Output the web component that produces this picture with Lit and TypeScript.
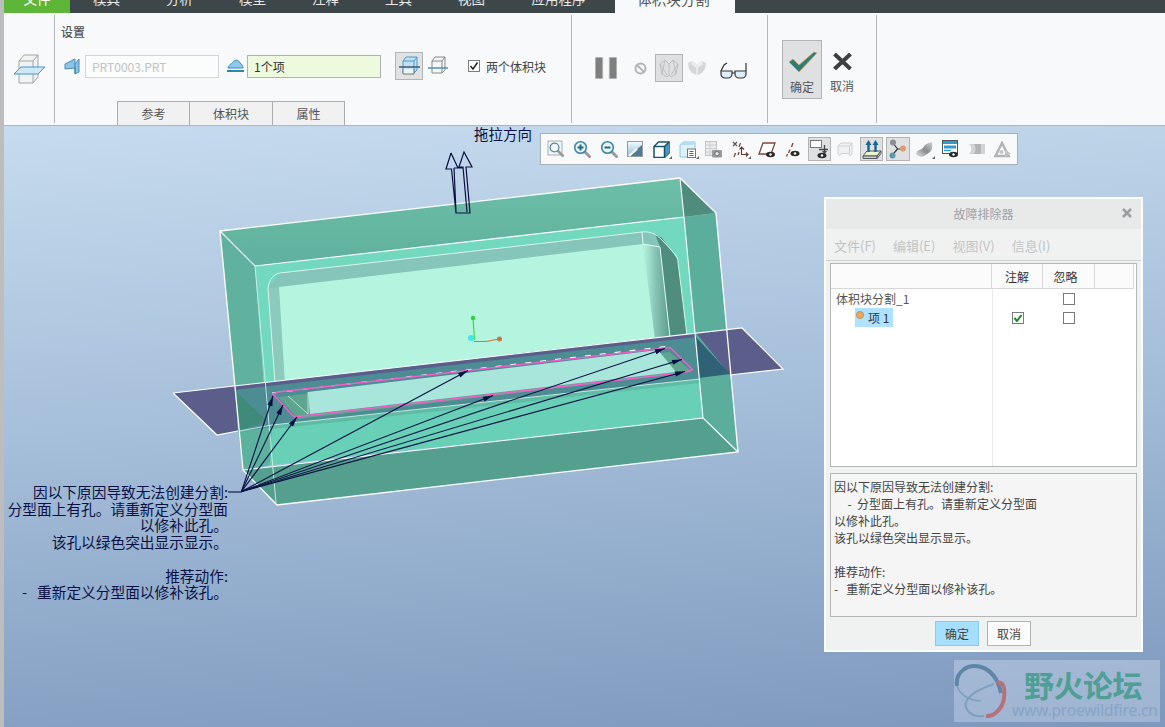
// app.ts - Creo volume split screen with the troubleshooter dialog open
import { LitElement, html, css, svg } from 'lit';
import { customElement } from 'lit/decorators.js';

const eye = (x: number, y: number) => svg`
  <ellipse cx=${x} cy=${y} rx="4.5" ry="2.8" fill="#2b2b2b" />
  <circle cx=${x} cy=${y} r="1.2" fill="#fff" />
`;

const icon = (w: number, h: number, body: unknown) => html`
  <svg width=${w} height=${h} viewBox="0 0 ${w} ${h}">${body}</svg>
`;

const lens = (sign: string) => svg`
  <path d="M11.5 11.5 16.5 16.5" stroke="#9a9a9a" stroke-width="3" stroke-linecap="round" />
  <circle cx="7.5" cy="7.5" r="5.8" fill="#eaf4fa" stroke="#3f86a6" stroke-width="1.6" />
  ${sign === '+' ? svg`<path d="M7.5 4.5v6" stroke="#1f6a8c" stroke-width="2" />` : ''}
  <path d="M4.5 7.5h6" stroke="#1f6a8c" stroke-width="2" />
`;

// floating view toolbar, left to right
const viewTools = [
  { pressed: false, more: false, art: icon(18, 18, svg`
    <rect x="1" y="1" width="14" height="14" fill="#f3f6f8" stroke="#a9adb0" />
    <path d="M10.5 10.5 16.5 16.5" stroke="#9a9a9a" stroke-width="2.6" />
    <circle cx="7.5" cy="7.5" r="4.4" fill="#f3f8fb" stroke="#4b8ca8" stroke-width="1.3" />`) },
  { pressed: false, more: false, art: icon(18, 18, lens('+')) },
  { pressed: false, more: false, art: icon(18, 18, lens('-')) },
  { pressed: false, more: false, art: icon(16, 16, svg`
    <defs><linearGradient id="sky" x1="0" y1="0" x2="0" y2="1">
      <stop offset="0" stop-color="#f4fbff" /><stop offset="1" stop-color="#8fc0de" />
    </linearGradient></defs>
    <rect x=".5" y=".5" width="15" height="15" fill="url(#sky)" stroke="#9b9b9b" />
    <path d="M2 15 15 4v11Z" fill="#4d7c96" />
    <path d="M2 15 10 8" stroke="#fff" stroke-width="2" />`) },
  { pressed: false, more: true, art: icon(17, 17, svg`
    <path d="M1 5.5 5.5 1H16v11l-4.5 4.5H1Z" fill="#fff" stroke="#17536c" stroke-width="1.5" />
    <path d="M11.5 5.5 16 1v11l-4.5 4.5Z" fill="#4f95b8" />
    <path d="M1 5.5h10.5v11M11.5 5.5 16 1" fill="none" stroke="#17536c" stroke-width="1.5" />`) },
  { pressed: false, more: true, art: icon(17, 17, svg`
    <path d="M1 4 4 1h12v9H11v6H1Z" fill="#dff1fb" stroke="#8fc6e6" />
    <path d="M1 4 4 1h12l-2 3Z" fill="#b4dcf2" />
    <rect x="8.5" y="8" width="8" height="8.5" fill="#fff" stroke="#777" />
    <path d="M10.5 10.5h4M10.5 12.5h4M10.5 14.5h4" stroke="#666" />`) },
  { pressed: false, more: false, art: icon(17, 17, svg`
    <rect x=".5" y=".5" width="11" height="14" fill="#ececec" stroke="#c4c4c4" />
    <path d="M1 4h10M1 7.5h10M1 11h10M5 1v13" stroke="#cfcfcf" />
    <rect x="7" y="9" width="10" height="7.5" rx="1" fill="#9b9b9b" />
    <circle cx="12" cy="12.7" r="2.2" fill="#e6e6e6" stroke="#6c6c6c" />`) },
  { pressed: false, more: true, art: icon(17, 17, svg`
    <path d="M1 1 5 5M5 1 1 5" stroke="#555" stroke-width="1.2" />
    <path d="M8.5 2 7 6M3.5 12 2 16M7 11 6 14" stroke="#7a4a3c" stroke-width="1.3" />
    <path d="M9.5 6v7.5H16M12 8.5 9.5 6 7.5 8.5M14 11.5l2 2-2 2" fill="none" stroke="#5d3a30" stroke-width="1.1" />`) },
  { pressed: false, more: false, art: icon(18, 17, svg`
    <path d="M5 2h12l-4 11H1Z" fill="#fff" stroke="#7a4a3c" stroke-width="1.3" />
    ${eye(12.5, 13.5)}`) },
  { pressed: false, more: false, art: icon(15, 15, svg`
    <path d="M8 1 6.5 5M5 7.5 3.5 11M2.5 12 1.5 14.5" stroke="#8a4a3c" stroke-width="1.4" />
    ${eye(10, 11.5)}`) },
  { pressed: true, more: false, art: icon(19, 19, svg`
    <rect x=".5" y=".5" width="11" height="7" fill="#fff" stroke="#777" />
    <path d="M9 9.5h9M14.5 5v8" stroke="#444" stroke-width="1.3" />
    <path d="M12 11h5l-2.5 3Z" fill="#444" />
    ${eye(12, 15.5)}`) },
  { pressed: false, more: false, art: icon(16, 15, svg`
    <path d="M1 4 4 1h11v11l-2 2-1-2.5H4L2.5 14 1 12Z" fill="#f0f1f1" stroke="#d0d2d2" />
    <path d="M1 4h11.5L15 1M12.5 4v8" fill="none" stroke="#d0d2d2" />`) },
  { pressed: true, more: false, art: icon(20, 20, svg`
    <path d="M1 17 5 12h14l-4 5Z" fill="#eaf6cf" stroke="#556" />
    <path d="M1 17h14v2.5H1ZM15 17l4-5v2.5l-4 5Z" fill="#c9d8a9" stroke="#556" />
    <path d="M6.5 13V5M13.5 13V5" stroke="#14688c" stroke-width="2.4" />
    <path d="M3.5 6 6.5 1 9.5 6ZM10.5 6 13.5 1 16.5 6Z" fill="#14688c" />`) },
  { pressed: true, more: false, art: icon(18, 20, svg`
    <path d="M4 4 8.5 10 3.5 16M8.5 10H14" stroke="#2f3a3f" stroke-width="1.2" fill="none" />
    <circle cx="4" cy="3.5" r="3" fill="#8b8d90" />
    <circle cx="14" cy="9.5" r="3" fill="#e09a70" />
    <circle cx="3.5" cy="16.5" r="3" fill="#5a97b0" />`) },
  { pressed: false, more: true, art: icon(18, 17, svg`
    <defs><linearGradient id="steel" x1="0" y1="1" x2="1" y2="0">
      <stop offset="0" stop-color="#e6e6e6" /><stop offset=".5" stop-color="#8a8a8a" /><stop offset="1" stop-color="#d5d5d5" />
    </linearGradient></defs>
    <path d="M1 13C1 9 6 9 8 7c1-3 4-5 9-6 1 5 0 10-5 12-3 3-8 4-11 0Z" fill="url(#steel)" />`) },
  { pressed: false, more: false, art: icon(17, 18, svg`
    <rect x=".5" y=".5" width="15" height="13" fill="#fff" stroke="#555" />
    <rect x="1" y="1" width="14" height="3" fill="#2f9ad0" />
    <rect x="2" y="5.5" width="12" height="3" fill="#2f9ad0" />
    <path d="M2 10.5h7" stroke="#2f9ad0" stroke-width="1.5" />
    ${eye(11.5, 14.5)}`) },
  { pressed: false, more: false, art: icon(16, 12, svg`
    <path d="M0 1h16v10H0c3-3 3-7 0-10Z" fill="#d4d4d4" />
    <path d="M5 1h7v10H5c2-3 2-7 0-10Z" fill="#b4b4b4" />`) },
  { pressed: false, more: false, art: icon(18, 17, svg`
    <path d="M8 2 1.5 15h13Z" fill="none" stroke="#b4b4b4" stroke-width="2.5" />
    <circle cx="7.5" cy="11" r="2" fill="#c8c8c8" />
    <path d="M11 9l6 3.5-6 3.5Z" fill="#c2c2c2" />`) },
];

const ribbonTabs = ['模具', '分析', '模型', '注释', '工具', '视图'];

@customElement('model-view')
export class ModelView extends LitElement {
  static override styles = css`
    :host {
      display: block;
      position: absolute;
      inset: 0;
    }

    svg {
      display: block;
    }
  `;

  private arrows() {
    const ox = 241.5;
    const oy = 491.5;
    const targets = [
      [273, 396], [283, 405], [297, 417], [468, 370.5], [493, 395.5],
      [665, 348.5], [682, 359.5], [685, 371.5],
    ];
    return targets.map(([x, y]) => {
      const len = Math.hypot(x - ox, y - oy);
      const ux = (x - ox) / len;
      const uy = (y - oy) / len;
      const bx = x - ux * 10;
      const by = y - uy * 10;
      const head = `${x},${y} ${bx - uy * 2.6},${by + ux * 2.6} ${bx + uy * 2.6},${by - ux * 2.6}`;
      return svg`
        <line x1=${ox} y1=${oy} x2=${x} y2=${y} stroke="#0b1044" stroke-width="1.1" />
        <polygon points=${head} fill="#0b1044" />
      `;
    });
  }

  override render() {
    return html`
      <svg width="1161" height="601" viewBox="4 126 1161 601">
        <defs>
          <linearGradient id="topFace" x1="0" y1="0" x2="0" y2="1">
            <stop offset="0" stop-color="#6dbfa9" /><stop offset="1" stop-color="#5fb09c" />
          </linearGradient>
          <linearGradient id="wallFade" x1="0" y1="0" x2="1" y2="0">
            <stop offset="0" stop-color="#b5f5df" /><stop offset=".5" stop-color="#84bfb3" /><stop offset="1" stop-color="#5b9c8c" />
          </linearGradient>
        </defs>

        <!-- block faces -->
        <polygon points="220,231 680,178 684,217 255,266" fill="url(#topFace)" />
        <polygon points="680,178 716,213 684,217" fill="#4f8c7b" />
        <polygon points="684,217 716,213 738,452 703,418" fill="#5bae9b" />
        <polygon points="220,231 255,266 270,465 243,470" fill="#60b29e" />
        <polygon points="243,470 703,418 738,452 277,505" fill="#549f8e" />
        <polygon points="255,266 684,217 703,418 270,465" fill="#72d8be" />

        <!-- cavity -->
        <polygon points="280,273 642,232 655,234 660,247 643,244 279,287 268,288" fill="#86c5ba" />
        <polygon points="268,288 279,287 285,381 275,383" fill="#8ccabd" />
        <polygon points="279,287 643,244 657,340 285,384" fill="#b5f5df" />
        <polygon points="643,244 660,247 670,338 655,340" fill="url(#wallFade)" />
        <polygon points="655,234 662,238 678,260 687,336 670,338 660,247" fill="#4f8e7e" />
        <path d="M268 288C269 279 274 274 280 273L642 232C650 231 656 234 662 240L675 254C677 257 678 259 678 262L687 335M268 288 275 383" fill="none" stroke="#d9f5ea" stroke-width="1" />
        <path d="M643 244 660 247M642 232 643 244M660 247 670 337" fill="none" stroke="#e4f7f0" stroke-width="1" />

        <!-- parting plane through the block -->
        <polygon points="173,393 235,386 238,431 217,435" fill="#5b5e8b" />
        <polygon points="696,333 742,328 783,369 730,375" fill="#5b5e8b" />
        <polygon points="696,337 730,374 699,378" fill="#2f6277" />
        <polygon points="270,426 700,379 703,418 270,465" fill="#67d0b6" />
        <polygon points="238,431 272,425 270,465 243,470" fill="#5cb29e" />
        <polygon points="235,386 696,333 700,379 238,431" fill="#4c8c93" />
        <polygon points="236,392 267,421 238,431" fill="#3f8a78" />
        <polygon points="235,386 696,333 696,337 235,390" fill="#5b5e8b" />
        <polygon points="278,397 670,352 692,372 298,419" fill="#5da58f" />
        <polygon points="308,392 658,350 676,372 310,414" fill="#a8e6dc" />
        <polygon points="272,425 700,379 700,383 272,429" fill="#5fbba4" />

        <path d="M173 393 742 328 783 369 730 375M173 393 217 435 238 431" fill="none" stroke="#fff" stroke-width="1.2" />
        <path d="M272 393 670 346" fill="none" stroke="#fff" stroke-width="1.2" stroke-dasharray="6 9" />
        <path d="M273 394 278 392 670 347.5 692.5 369.5 685 372.5 298 416.5 293 416Z" fill="none" stroke="#f060c8" stroke-width="1.5" />
        <path d="M308 392V414M288 396 308 414" fill="none" stroke="#cdeee4" stroke-width=".8" />

        <!-- white silhouette edges -->
        <path d="M220 231 680 178 716 213 738 452 277 505 243 470Z" fill="none" stroke="#fff" stroke-width="1.3" />
        <path d="M220 231 255 266 684 217 680 178M684 217 703 418 738 452M243 470 703 418" fill="none" stroke="#fff" stroke-width="1.1" />
        <path d="M255 266 276 503M239 431 272 425M272 425 700 379" fill="none" stroke="#cdeee4" stroke-width=".9" />

        <!-- model origin -->
        <path d="M474.5 340 473 318" stroke="#35e23c" stroke-width="1.2" />
        <circle cx="473" cy="318" r="2.2" fill="#2fd13a" />
        <path d="M474 341.5 486 341.5 499 339" fill="none" stroke="#c47b3c" stroke-width="1.2" />
        <circle cx="499.5" cy="339" r="2.5" fill="#c47b3c" />
        <circle cx="471" cy="338" r="3" fill="#3fe6ee" />

        <!-- pull direction arrow -->
        <path d="M451 153 446 169 451.5 169 456 213H470L466 167 472 167 464 152 459 167 463 167 467 212M451 153 458 168M454 168 456 212M454 168H463" fill="none" stroke="#0b1044" stroke-width="1.2" />

        <!-- leader fan -->
        <line x1="228" y1="492" x2="242" y2="492" stroke="#0b1044" stroke-width="1.1" />
        ${this.arrows()}
      </svg>
    `;
  }
}

@customElement('app-root')
export class AppRoot extends LitElement {
  static override styles = css`
    :host {
      display: block;
      width: 1165px;
      height: 727px;
      overflow: hidden;
      font-family: 'Noto Sans CJK SC', 'Noto Sans', sans-serif;
      font-size: 12px;
      color: #444;
    }

    svg {
      display: block;
      flex: none;
    }

    .shell {
      display: flex;
      height: 100%;
    }

    .strip {
      width: 4px;
      flex: none;
      background: #bdbdbd;
    }

    .main {
      flex: 1;
      display: flex;
      flex-direction: column;
      min-width: 0;
    }

    /* ribbon tabs, cut off by the top of the screenshot */
    .tabs {
      height: 13px;
      flex: none;
      display: flex;
      overflow: hidden;
      background: #3d4648;
      color: #e8eaea;
      font-size: 13.5px;
      line-height: 1px;
    }

    .tab {
      width: 73px;
      text-align: center;
    }

    .tab span {
      display: block;
      margin-top: -2px;
    }

    .tab.file {
      width: 66px;
      background: #5db637;
      color: #fff;
    }

    .tab.apps {
      width: 107px;
      padding-right: 6px;
      box-sizing: border-box;
    }

    .tab.active {
      width: 120px;
      background: #f8f9fb;
      color: #555;
      font-size: 14.5px;
      padding-right: 3px;
      box-sizing: border-box;
    }

    .ribbon {
      height: 112px;
      flex: none;
      display: flex;
      background: #f8f9fb;
      border-bottom: 1px solid #b3b6b8;
    }

    .group {
      display: flex;
      flex: none;
      margin: 2px 0;
      border-right: 1px solid #b4b6b8;
    }

    .group.feature {
      width: 51px;
      align-items: center;
      justify-content: center;
      box-sizing: border-box;
    }

    .group.settings {
      width: 517px;
      flex-direction: column;
      padding-left: 6px;
      box-sizing: border-box;
    }

    .group.settings .title {
      margin-top: 8px;
      height: 17px;
      line-height: 17px;
      color: #555;
      font-weight: 500;
    }

    .fields {
      display: flex;
      align-items: center;
      margin-top: 12px;
      height: 28px;
    }

    .part-icon {
      margin-left: 3px;
    }

    .field {
      width: 134px;
      height: 23px;
      box-sizing: border-box;
      padding-left: 6px;
      line-height: 21px;
      border: 1px solid #d3d5d6;
      background: #fbfcfc;
      color: #bfc3c5;
      margin-left: 5px;
    }

    .plane-icon {
      margin-left: 8px;
    }

    .field.picked {
      border-color: #b0b2b1;
      background: #edfadd;
      color: #333;
      margin-left: 3px;
    }

    .toggle {
      width: 28px;
      height: 28px;
      margin-left: 14px;
      box-sizing: border-box;
      display: flex;
      align-items: center;
      justify-content: center;
      background: #e0e1e3;
      border: 1px solid #b2b4b5;
    }

    .alt-icon {
      margin-left: 5px;
    }

    .check-row {
      display: flex;
      align-items: center;
      gap: 6px;
      margin-left: 20px;
    }

    .box {
      width: 12px;
      height: 12px;
      box-sizing: border-box;
      border: 1px solid #7b7b7b;
      background: #fff;
      display: flex;
      align-items: center;
      justify-content: center;
      flex: none;
    }

    .subtabs {
      display: flex;
      margin: auto 0 -2px 56px;
    }

    .subtab {
      height: 24px;
      box-sizing: border-box;
      line-height: 24px;
      text-align: center;
      background: #f0f1f0;
      border: 1px solid #adadad;
      border-bottom: none;
      margin-right: -1px;
      color: #555;
    }

    .subtab.narrow {
      width: 73px;
    }

    .subtab.wide {
      width: 84px;
    }

    .group.display {
      width: 196px;
      align-items: center;
      padding: 0 0 2px 23px;
      box-sizing: border-box;
    }

    .no-icon {
      margin-left: 17px;
    }

    .glasses {
      margin: 5px 0 0 14px;
    }

    .group.confirm {
      width: 109px;
      padding: 25px 0 0 14px;
      box-sizing: border-box;
    }

    .pressed {
      background: #dfe0e2;
      border: 1px solid #b2b4b5;
      box-sizing: border-box;
    }

    .wire {
      width: 28px;
      height: 28px;
      display: flex;
      align-items: center;
      justify-content: center;
      margin: 0 5px 0 8px;
    }

    .action {
      width: 40px;
      height: 59px;
      box-sizing: border-box;
      display: flex;
      flex-direction: column;
      align-items: center;
      padding-top: 10px;
      gap: 7px;
      color: #555;
      line-height: 16px;
    }

    .action.cancel {
      padding-top: 13px;
      gap: 8px;
    }

    /* graphics window */
    .canvas {
      flex: 1;
      position: relative;
      background: linear-gradient(176deg, #c6dbee 0%, #a6bfda 45%, #7d98bd 100%);
    }

    .drag-label {
      position: absolute;
      left: 470px;
      top: 0;
      font-size: 14.5px;
      line-height: 16px;
      color: #0b1044;
    }

    .annotation {
      position: absolute;
      left: 0;
      top: 358px;
      width: 224px;
      font-size: 14.7px;
      line-height: 16.7px;
      color: #0b1044;
      text-align: right;
      white-space: pre;
    }

    .view-tools {
      position: absolute;
      left: 536px;
      top: 7px;
      width: 478px;
      height: 32px;
      box-sizing: border-box;
      padding-left: 2px;
      display: flex;
      align-items: center;
      background: #f8f9fb;
      border: 1.5px solid #a9b1b8;
    }

    .tool {
      width: 26.3px;
      height: 24px;
      flex: none;
      position: relative;
      display: flex;
      align-items: center;
      justify-content: center;
    }

    .tool.pressed {
      background: none;
      border: none;
    }

    .tool.pressed::before {
      content: '';
      position: absolute;
      inset: 0 1.6px;
      background: #dfe0e2;
      border: 1px solid #b2b4b5;
    }

    .tool svg {
      position: relative;
    }

    .tool.more::after {
      content: '';
      position: absolute;
      right: 2px;
      bottom: 2px;
      border-left: 3px solid transparent;
      border-bottom: 3px solid #666;
    }

    /* troubleshooter dialog */
    .dialog {
      position: absolute;
      left: 820px;
      top: 71px;
      width: 319px;
      height: 455px;
      box-sizing: border-box;
      display: flex;
      flex-direction: column;
      background: #f0f2f1;
      border: 2px solid #fbfcfc;
    }

    .dialog-title {
      height: 30px;
      flex: none;
      position: relative;
      background: #e8eae9;
      color: #9aa2a8;
      text-align: center;
      line-height: 30px;
    }

    .dialog-close {
      position: absolute;
      right: 9px;
      top: 9px;
    }

    .menu {
      height: 32px;
      flex: none;
      box-sizing: border-box;
      display: flex;
      gap: 17px;
      align-items: center;
      padding: 1px 0 0 8px;
      border-bottom: 1px solid #cfd2d2;
      color: #c0c4c6;
      font-size: 13px;
    }

    .tree {
      height: 204px;
      flex: none;
      margin: 2px 4px 0;
      box-sizing: border-box;
      display: flex;
      flex-direction: column;
      background: #fff;
      border: 1px solid #b5b7b7;
    }

    .tree-head,
    .tree-row {
      display: grid;
      grid-template-columns: 161px 51px 52px 1fr;
    }

    .tree-head {
      height: 24px;
      flex: none;
      margin-right: 2px;
      background: #fbfbfb;
      border-bottom: 1px solid #d8d8d8;
      line-height: 25px;
      color: #333;
    }

    .tree-head > div {
      border-right: 1px solid #d8d8d8;
      text-align: center;
    }

    .tree-head .shift {
      padding-right: 6px;
    }

    .tree-body {
      flex: 1;
      background: linear-gradient(#e8e8e8, #e8e8e8) 161px 0 / 1px 100% no-repeat;
    }

    .tree-row {
      height: 19px;
      line-height: 18px;
      align-items: center;
    }

    .tree-row .name {
      padding-left: 5px;
      color: #555;
    }

    .tree-row .cell {
      display: flex;
      justify-content: center;
    }

    .item {
      display: flex;
      align-items: center;
      gap: 4px;
      width: 38px;
      height: 19px;
      margin-left: 24px;
      box-sizing: border-box;
      background: #aee2ff;
      color: #333;
    }

    .dot {
      width: 8px;
      height: 8px;
      margin: -5px 0 0 1px;
      border-radius: 50%;
      background: #e8a860;
      border: 1px solid #c98f4e;
      box-sizing: border-box;
      flex: none;
    }

    .message {
      height: 144px;
      flex: none;
      margin: 6px 4px 0;
      padding: 4px 3px;
      box-sizing: border-box;
      background: #f5f5f5;
      border: 1px solid #b5b7b7;
      line-height: 17px;
      white-space: pre;
      color: #444;
    }

    .dialog-buttons {
      display: flex;
      justify-content: center;
      gap: 8px;
      margin: 4px 1px 0 0;
    }

    .btn {
      width: 44px;
      height: 25px;
      box-sizing: border-box;
      text-align: center;
      line-height: 23px;
      background: #fbfbfb;
      border: 1px solid #b2b2b2;
      color: #444;
    }

    .btn.primary {
      background: #a6dfff;
      border-color: #80ccff;
    }

    /* forum watermark */
    .watermark {
      position: absolute;
      left: 950px;
      top: 534px;
      width: 206px;
      height: 62px;
      display: flex;
      background: rgba(205, 220, 238, 0.42);
    }

    .watermark-text {
      display: flex;
      flex-direction: column;
    }

    .watermark-name {
      font-size: 30px;
      font-weight: 700;
      line-height: 34px;
      margin: 7px 0 0 12px;
      letter-spacing: -0.5px;
      color: #4f9f95;
    }

    .watermark-url {
      font-family: 'Noto Sans', sans-serif;
      font-size: 15.5px;
      line-height: 16px;
      letter-spacing: -0.15px;
      margin-top: 1px;
      color: #86a4c8;
    }
  `;

  override render() {
    return html`
      <div class="shell">
        <div class="strip"></div>
        <div class="main">
          <div class="tabs">
            <div class="tab file"><span>文件</span></div>
            ${ribbonTabs.map(name => html`<div class="tab"><span>${name}</span></div>`)}
            <div class="tab apps"><span>应用程序</span></div>
            <div class="tab active"><span>体积块分割</span></div>
          </div>

          <div class="ribbon">${this.renderRibbon()}</div>

          <div class="canvas">
            <model-view></model-view>
            <div class="drag-label">拖拉方向</div>
            <div class="annotation">因以下原因导致无法创建分割:
分型面上有孔。请重新定义分型面
以修补此孔。
该孔以绿色突出显示显示。

推荐动作:
-   重新定义分型面以修补该孔。</div>
            <div class="view-tools">
              ${viewTools.map(
                t => html`<div class="tool ${t.pressed ? 'pressed' : ''} ${t.more ? 'more' : ''}">${t.art}</div>`
              )}
            </div>
            ${this.renderDialog()}
            ${this.renderWatermark()}
          </div>
        </div>
      </div>
    `;
  }

  private renderRibbon() {
    return html`
      <div class="group feature">
        <svg width="33" height="30" viewBox="0 0 33 30">
          <path d="M6 7 11 1h14v22l-5 6H6Z" fill="#f1f2f2" stroke="#a3a5a5" />
          <path d="M6 7h14v22M20 7l5-6" fill="none" stroke="#a3a5a5" />
          <path d="M1 20 8 13h24l-7 7Z" fill="#cfe8f8" stroke="#3f97cc" />
        </svg>
      </div>

      <div class="group settings">
        <div class="title">设置</div>
        <div class="fields">
          <svg class="part-icon" width="16" height="18" viewBox="0 0 16 18">
            <path d="M1 7 11 2v5l4-5v13l-4 2V11L1 12Z" fill="#8cc4e6" stroke="#4a8db8" />
            <path d="M11 7v10" stroke="#3b7ca5" />
          </svg>
          <div class="field">PRT0003.PRT</div>
          <svg class="plane-icon" width="17" height="14" viewBox="0 0 17 14">
            <path d="M1 9C2 5 5 5 6 3c2-3 6-2 7 1 2 1 3 3 3 5Z" fill="#8cc9ea" stroke="#3b8dba" />
            <path d="M0 12h17" stroke="#2e86b6" stroke-width="2" />
          </svg>
          <div class="field picked">1个项</div>
          <div class="toggle">
            <svg width="21" height="20" viewBox="0 0 21 20">
              <path d="M4 5 7 1h11v13l-3 3H4Z" fill="#bfe2f7" stroke="#4d98c7" />
              <path d="M4 5h11v12M15 5l3-4" fill="none" stroke="#4d98c7" />
              <path d="M0 11h21" stroke="#49566b" stroke-width="1.5" />
              <path d="M4 13v5h11v-5" fill="#eef3f6" stroke="#777" />
            </svg>
          </div>
          <svg class="alt-icon" width="20" height="20" viewBox="0 0 20 20">
            <path d="M4 5 7 1h10v13l-3 3H4Z" fill="#f6f7f8" stroke="#888" />
            <path d="M4 5h10v12M14 5l3-4" fill="none" stroke="#888" />
            <path d="M0 12h20" stroke="#4d8fbc" stroke-width="1.5" />
          </svg>
          <label class="check-row">
            <span class="box">
              <svg width="10" height="10" viewBox="0 0 10 10"><path d="M1.5 5 4 8 8.5 1.5" fill="none" stroke="#222" stroke-width="1.5" /></svg>
            </span>
            两个体积块
          </label>
        </div>
        <div class="subtabs">
          <div class="subtab narrow">参考</div>
          <div class="subtab wide">体积块</div>
          <div class="subtab narrow">属性</div>
        </div>
      </div>

      <div class="group display">
        <svg width="22" height="22" viewBox="0 0 22 22">
          <rect x="0" y="0" width="8" height="22" fill="#7f7f7f" stroke="#e5e5e5" />
          <rect x="14" y="0" width="8" height="22" fill="#7f7f7f" stroke="#e5e5e5" />
        </svg>
        <svg class="no-icon" width="13" height="13" viewBox="0 0 13 13">
          <circle cx="6.5" cy="6.5" r="5" fill="none" stroke="#b4b6b6" stroke-width="2" />
          <path d="M3 3 10 10" stroke="#b4b6b6" stroke-width="2" />
        </svg>
        <div class="wire pressed">
          <svg width="20" height="20" viewBox="0 0 20 20">
            <path d="M1 6 6 2l4 4 4-4 5 4-2 10-5 3-2-2-2 2-5-3ZM10 6v11M6 2 3 16M14 2l3 14M1 6l7 11M19 6l-7 11" fill="none" stroke="#b5b7b7" stroke-width=".8" />
          </svg>
        </div>
        <svg width="18" height="14" viewBox="0 0 18 14">
          <path d="M0 2 4 0l4.5 3v11L4 12 1 8Z" fill="#d5d7d7" />
          <path d="M18 2l-4-2-4.5 3v11L14 12l3-4Z" fill="#d5d7d7" />
          <path d="M4 0 8.5 3v4L3 3ZM14 0 9.500 3v4L15 3Z" fill="#ecedee" />
        </svg>
        <svg class="glasses" width="27" height="17" viewBox="0 0 27 17">
          <path d="M1 9h11v3a4 4 0 0 1-4 4H5a4 4 0 0 1-4-4ZM15 9h11v3a4 4 0 0 1-4 4h-3a4 4 0 0 1-4-4Z" fill="#dceefb" stroke="#333" stroke-width="1.2" />
          <path d="M12 11h3M1 9 4 3 7 1M26 9V1" fill="none" stroke="#333" stroke-width="1.2" />
        </svg>
      </div>

      <div class="group confirm">
        <div class="action pressed">
          <svg width="29" height="21" viewBox="0 0 29 21">
            <path d="M1 11 5 8 11 14 26 1 29 2 11 21Z" fill="#2f7d78" stroke="#d5a15a" stroke-width=".8" />
          </svg>
          确定
        </div>
        <div class="action cancel">
          <svg width="19" height="17" viewBox="0 0 19 17">
            <path d="M1.5 1 17.5 16M17.5 1 1.5 16" stroke="#3f3f3f" stroke-width="4" />
          </svg>
          取消
        </div>
      </div>
    `;
  }

  private renderDialog() {
    const empty = html`<span class="box"></span>`;
    const ticked = html`<span class="box">
      <svg width="10" height="10" viewBox="0 0 10 10"><path d="M1.5 5 4 8 8.5 2" fill="none" stroke="#118a1c" stroke-width="2" /></svg>
    </span>`;
    return html`
      <div class="dialog">
        <div class="dialog-title">
          故障排除器
          <svg class="dialog-close" width="10" height="10" viewBox="0 0 10 10">
            <path d="M1 1 9 9M9 1 1 9" stroke="#9b9fa1" stroke-width="2.5" />
          </svg>
        </div>
        <div class="menu">
          <span>文件(F)</span><span>编辑(E)</span><span>视图(V)</span><span>信息(I)</span>
        </div>
        <div class="tree">
          <div class="tree-head">
            <div></div>
            <div>注解</div>
            <div class="shift">忽略</div>
            <div></div>
          </div>
          <div class="tree-body">
            <div class="tree-row">
              <div class="name">体积块分割_1</div>
              <div class="cell"></div>
              <div class="cell">${empty}</div>
            </div>
            <div class="tree-row">
              <div class="item"><span class="dot"></span><span>项 1</span></div>
              <div class="cell">${ticked}</div>
              <div class="cell">${empty}</div>
            </div>
          </div>
        </div>
        <div class="message">因以下原因导致无法创建分割:
     -  分型面上有孔。请重新定义分型面
以修补此孔。
该孔以绿色突出显示显示。

推荐动作:
-   重新定义分型面以修补该孔。</div>
        <div class="dialog-buttons">
          <div class="btn primary">确定</div>
          <div class="btn">取消</div>
        </div>
      </div>
    `;
  }

  private renderWatermark() {
    return html`
      <div class="watermark">
        <svg width="58" height="62" viewBox="0 0 58 62">
          <path d="M3 26C1 12 14 3 27 7c10 3 17 12 20 26" fill="none" stroke="#5f86a8" stroke-width="4" />
          <path d="M3 26c3 9 12 14 24 15" fill="none" stroke="#7f9fbd" stroke-width="1.5" />
          <path d="M42 23c8-3 9 6 8 15-1 10-10 19-18 18" fill="none" stroke="#b4737c" stroke-width="4" />
          <path d="M30 56C17 58 8 48 13 40c4-6 15-12 27-16" fill="none" stroke="#7f9fbd" stroke-width="2" />
        </svg>
        <div class="watermark-text">
          <div class="watermark-name">野火论坛</div>
          <div class="watermark-url">www.proewildfire.cn</div>
        </div>
      </div>
    `;
  }
}

declare global {
  interface HTMLElementTagNameMap {
    'app-root': AppRoot;
    'model-view': ModelView;
  }
}
